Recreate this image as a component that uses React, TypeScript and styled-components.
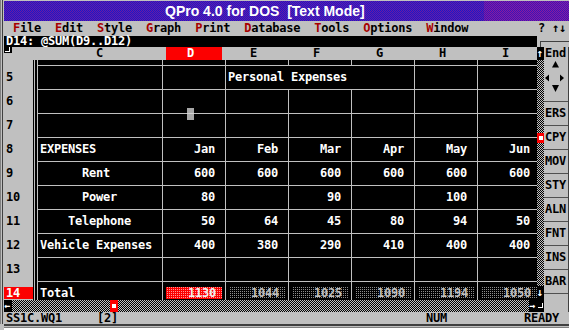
import styled, { createGlobalStyle, css } from 'styled-components';

const GRAY = '#c0c0c0';
const RED = '#fc0000';
const MENU_RED = '#a80000';
const LINE = '#c0c0c0';

const GlobalStyle = createGlobalStyle`
  html, body {
    margin: 0;
    padding: 0;
    background: #ffffff;
  }
  body {
    width: 569px;
    height: 330px;
    overflow: hidden;
  }
`;

// the DOS text mode font: bold, 7px pitch
const dosText = css`
  font-family: 'DejaVu Sans Mono', 'Liberation Mono', monospace;
  font-weight: bold;
  font-size: 12px;
  letter-spacing: -0.2246px;
  white-space: pre;
`;

const checker = (a: string, b: string) => css`
  background: repeating-conic-gradient(${a} 0 25%, ${b} 0 50%) 0 0 / 2px 2px;
`;

const COL_TEMPLATE = '29px 5px 124px repeat(6, 63px)';
const COLS = ['C', 'D', 'E', 'F', 'G', 'H', 'I'];
const ACTIVE_COL = 'D';
const ACTIVE_ROW = 14;

type CellData = { text?: string; align?: 'left' | 'right'; span?: number; total?: boolean };

const blank = (): CellData => ({});
const nums = (values: string[]): CellData[] => values.map(text => ({ text, align: 'right' }));

const ROWS: { n: number; cells: CellData[] }[] = [
  {
    n: 5,
    cells: [blank(), blank(), { text: 'Personal Expenses', align: 'left', span: 2 }, blank(), blank(), blank()]
  },
  { n: 6, cells: COLS.map(blank) },
  { n: 7, cells: COLS.map(blank) },
  {
    n: 8,
    cells: [{ text: 'EXPENSES', align: 'left' }, ...nums(['Jan', 'Feb', 'Mar', 'Apr', 'May', 'Jun'])]
  },
  {
    n: 9,
    cells: [{ text: '      Rent', align: 'left' }, ...nums(['600', '600', '600', '600', '600', '600'])]
  },
  {
    n: 10,
    cells: [{ text: '      Power', align: 'left' }, ...nums(['80', '', '90', '', '100', ''])]
  },
  {
    n: 11,
    cells: [{ text: '    Telephone', align: 'left' }, ...nums(['50', '64', '45', '80', '94', '50'])]
  },
  {
    n: 12,
    cells: [{ text: 'Vehicle Expenses', align: 'left' }, ...nums(['400', '380', '290', '410', '400', '400'])]
  },
  { n: 13, cells: COLS.map(blank) },
  {
    n: 14,
    cells: [
      { text: 'Total', align: 'left' },
      ...['1130', '1044', '1025', '1090', '1194', '1050'].map(text => ({ text, align: 'right' as const, total: true }))
    ]
  }
];

const MENU = ['File', 'Edit', 'Style', 'Graph', 'Print', 'Database', 'Tools', 'Options', 'Window'];
const BUTTONS = ['ERS', 'CPY', 'MOV', 'STY', 'ALN', 'FNT', 'INS', 'BAR'];
const STATUS = 'SS1C.WQ1'.padEnd(13) + '[2]'.padEnd(47) + 'NUM'.padEnd(14) + 'READY';

export default function App() {
  return (
    <>
      <GlobalStyle />
      <Window>
        <TitleBar>
          <TitleMain>QPro 4.0 for DOS  [Text Mode]</TitleMain>
          <TitleTail />
        </TitleBar>

        <MenuBar>
          {MENU.map(item => (
            <MenuItem key={item}>
              <Hot>{item[0]}</Hot>
              {item.slice(1)}
            </MenuItem>
          ))}
          <MenuRight>? ↑↓</MenuRight>
        </MenuBar>

        <Body>
          <Formula>D14: @SUM(D9..D12)</Formula>
          <Cap>
            <CapBox />
          </Cap>

          <ColHead>
            <CornerCell>
              <CornerBox>
                <CornerMark />
              </CornerBox>
            </CornerCell>
            <div />
            {COLS.map((c, i) => (
              <HeaderCell key={c}>
                <HeaderTag $active={c === ACTIVE_COL} $first={i === 0}>
                  {c}
                </HeaderTag>
              </HeaderCell>
            ))}
          </ColHead>
          <UpBox>↑</UpBox>
          <EndLabel>End</EndLabel>

          <Sheet>
            <SheetRow $height={5}>
              <RowHead />
              <Sep />
              {COLS.map((c, i) => (
                <Cell key={c} $left={i > 0} />
              ))}
            </SheetRow>
            {ROWS.map(row => (
              <SheetRow key={row.n} $height={24}>
                <RowHead>
                  <RowNum $active={row.n === ACTIVE_ROW}>{row.n}</RowNum>
                </RowHead>
                <Sep />
                {row.cells.map((cell, i) => (
                  <Cell
                    key={i}
                    $top
                    $left={i > 0 && !(row.n === 5 && i === 3)}
                    $align={cell.align}
                    $span={cell.span}
                  >
                    {cell.total ? (
                      <TotalBox $active={COLS[i] === ACTIVE_COL}>{cell.text}</TotalBox>
                    ) : (
                      cell.text
                    )}
                  </Cell>
                ))}
              </SheetRow>
            ))}
            <MouseCursor />
          </Sheet>

          <VScroll>
            <ThumbV>
              <ThumbDot />
            </ThumbV>
            <DownBox>↓</DownBox>
          </VScroll>

          <Panel>
            <ArrowPad>
              <svg width="25" height="41" viewBox="0 0 25 41">
                <polygon points="8,7.5 11.5,1 15,7.5" fill="#000" />
                <polygon points="1,18 5,14.5 5,21.5" fill="#000" />
                <polygon points="20,18 16,14.5 16,21.5" fill="#000" />
                <polygon points="8,25 15,25 11.5,32" fill="#000" />
              </svg>
            </ArrowPad>
            {BUTTONS.map(b => (
              <PanelButton key={b}>{b}</PanelButton>
            ))}
            <PanelFill />
          </Panel>

          <HScroll>
            <ArrowBox>←</ArrowBox>
            <HTrack>
              <ThumbH>
                <ThumbDot />
              </ThumbH>
            </HTrack>
            <ArrowBox>→</ArrowBox>
          </HScroll>
          <Corner>
            <CornerMark />
          </Corner>

          <Status>{STATUS}</Status>
        </Body>
        <BottomEdge />
      </Window>
    </>
  );
}

const Window = styled.div`
  width: 569px;
  height: 330px;
  box-sizing: border-box;
  padding: 1px 0 0 4px;
  display: flex;
  flex-direction: column;
  background:
    linear-gradient(to right, #808080 0 1px, ${GRAY} 1px 2px, #404040 2px 3px, ${GRAY} 3px 4px) no-repeat 0 0 / 4px
      324px,
    ${GRAY};
`;

const TitleBar = styled.div`
  height: 20px;
  display: flex;
`;

const TitleMain = styled.div`
  flex: 1;
  ${checker('#1a18c8', '#6a1aa4')};
  padding-left: 161px;
  color: #ffffff;
  font: bold 14px/20px 'Liberation Sans', Arial, sans-serif;
  white-space: pre;
`;

const TitleTail = styled.div`
  width: 85px;
  ${checker('#3a14b8', '#8a1aa0')};
`;

const MenuBar = styled.div`
  height: 15px;
  display: flex;
  padding-left: 9px;
  background: ${GRAY};
  color: #000000;
  ${dosText};
  line-height: 15px;
`;

const MenuItem = styled.span`
  margin-right: 14px;
`;

const Hot = styled.span`
  color: ${MENU_RED};
`;

const MenuRight = styled.span`
  margin-left: auto;
  margin-right: 3px;
`;

const Body = styled.div`
  display: grid;
  grid-template-columns: 533px 7px 25px;
  grid-template-rows: 11px 13px 240px 12px 12px;
  grid-template-areas:
    'formula cap cap'
    'colhead up end'
    'sheet vscroll panel'
    'hscroll corner panel'
    'status status status';
`;

const Formula = styled.div`
  grid-area: formula;
  background: #000000;
  color: #ffffff;
  padding-left: 2px;
  ${dosText};
  line-height: 11px;
`;

const Cap = styled.div`
  grid-area: cap;
  background: ${GRAY};
  padding: 5px 0 0 3px;
`;

const CapBox = styled.div`
  height: 100%;
  box-sizing: border-box;
  border-top: 1px solid #404040;
  border-left: 1px solid #404040;
`;

const ColHead = styled.div`
  grid-area: colhead;
  display: grid;
  grid-template-columns: ${COL_TEMPLATE};
  overflow: hidden;
  background: ${GRAY};
  ${dosText};
  color: #000000;
`;

const CornerCell = styled.div`
  display: flex;
  align-items: flex-start;
`;

const CornerBox = styled.div`
  width: 8px;
  height: 6px;
  background: #000000;
`;

const CornerMark = styled.div`
  width: 4px;
  height: 4px;
  margin-left: 1px;
  border-right: 1px solid #ffffff;
  border-bottom: 1px solid #ffffff;
`;

const HeaderCell = styled.div`
  display: flex;
`;

const HeaderTag = styled.div<{ $active?: boolean; $first?: boolean }>`
  flex: 1;
  margin: 0 3px 0 4px;
  padding: 0 ${p => (p.$first ? 2 : 7)}px 0 0;
  text-align: center;
  line-height: 13px;
  background: ${p => (p.$active ? RED : 'transparent')};
  color: ${p => (p.$active ? '#ffffff' : '#000000')};
`;

const UpBox = styled.div`
  grid-area: up;
  background: #000000;
  color: #ffffff;
  ${dosText};
  font-size: 11px;
  letter-spacing: 0;
  line-height: 13px;
  text-indent: -0.5px;
`;

const EndLabel = styled.div`
  grid-area: end;
  background: ${GRAY};
  padding-left: 1px;
  ${dosText};
  line-height: 13px;
  color: #000000;
  border-right: 1px solid #404040;
`;

const Sheet = styled.div`
  grid-area: sheet;
  position: relative;
  overflow: hidden;
  background: #000000;
  display: flex;
  flex-direction: column;
`;

const SheetRow = styled.div<{ $height: number }>`
  flex-shrink: 0;
  height: ${p => p.$height}px;
  display: grid;
  grid-template-columns: ${COL_TEMPLATE};
`;

const RowHead = styled.div`
  background: ${GRAY};
  display: flex;
  align-items: center;
`;

const RowNum = styled.div<{ $active?: boolean }>`
  flex: 1;
  height: 12px;
  padding-left: 2px;
  ${dosText};
  line-height: 12px;
  background: ${p => (p.$active ? RED : 'transparent')};
  color: ${p => (p.$active ? '#ffffff' : '#000000')};
`;

const Sep = styled.div`
  background: linear-gradient(to right, #000 0 1px, ${LINE} 1px 2px, #000 2px 4px, ${LINE} 4px 5px);
`;

const Cell = styled.div<{ $top?: boolean; $left?: boolean; $align?: 'left' | 'right'; $span?: number }>`
  grid-column: span ${p => p.$span ?? 1};
  box-sizing: border-box;
  display: flex;
  align-items: center;
  justify-content: ${p => (p.$align === 'right' ? 'flex-end' : 'flex-start')};
  padding: 0 ${p => (p.$align === 'right' ? 10 : 0)}px 1px ${p => (p.$align === 'left' ? 2 : 0)}px;
  border-top: ${p => (p.$top ? `1px solid ${LINE}` : 'none')};
  border-left: ${p => (p.$left ? `1px solid ${LINE}` : 'none')};
  background: #000000;
  color: #ffffff;
  ${dosText};
  line-height: 12px;
  overflow: hidden;
`;

const TotalBox = styled.div<{ $active?: boolean }>`
  flex: 1;
  height: 12px;
  margin: 0 -7px 0 3px;
  padding-right: 6px;
  text-align: right;
  line-height: 12px;
  color: ${p => (p.$active ? '#f0f0f0' : '#c0c0c0')};
  background: ${p =>
    p.$active
      ? `conic-gradient(#ff9a9a 0 25%, ${RED} 0) 0 0 / 2px 2px`
      : 'conic-gradient(#8c8c8c 0 25%, #000 0) 0 0 / 2px 2px'};
`;

const MouseCursor = styled.div`
  position: absolute;
  left: 183px;
  top: 48px;
  width: 7px;
  height: 12px;
  background: linear-gradient(to bottom, #a8a8a8 0 5px, #d4d4d4 5px 6px, #a8a8a8 6px);
`;

const VScroll = styled.div`
  grid-area: vscroll;
  display: flex;
  flex-direction: column;
  ${checker('#000000', GRAY)};
`;

const ThumbV = styled.div`
  margin-top: 73px;
  height: 10px;
  background: ${RED};
  display: flex;
  align-items: center;
  justify-content: center;
`;

const ThumbDot = styled.div`
  width: 4px;
  height: 4px;
  background: #ffffff;
`;

const DownBox = styled.div`
  margin-top: auto;
  height: 14px;
  background: #000000;
  color: #ffffff;
  ${dosText};
  font-size: 11px;
  letter-spacing: 0;
  line-height: 13px;
  text-indent: -0.5px;
`;

const Panel = styled.div`
  grid-area: panel;
  display: flex;
  flex-direction: column;
  background: ${GRAY};
  border-right: 1px solid #404040;
`;

const ArrowPad = styled.div`
  height: 41px;
  flex-shrink: 0;

  svg {
    display: block;
  }
`;

const PanelButton = styled.div`
  height: 24px;
  flex-shrink: 0;
  box-sizing: border-box;
  border-top: 1px solid #505050;
  padding-left: 1px;
  ${dosText};
  line-height: 23px;
  color: #000000;
  overflow: hidden;
`;

const PanelFill = styled.div`
  flex: 1;
  border-top: 1px solid #505050;
`;

const HScroll = styled.div`
  grid-area: hscroll;
  display: flex;
`;

const ArrowBox = styled.div`
  width: 8px;
  background: #000000;
  color: #ffffff;
  ${dosText};
  font-size: 10px;
  letter-spacing: 0;
  line-height: 11px;
`;

const HTrack = styled.div`
  flex: 1;
  display: flex;
  ${checker('#000000', GRAY)};
`;

const ThumbH = styled.div`
  margin-left: 98px;
  width: 8px;
  background: ${RED};
  display: flex;
  align-items: center;
  justify-content: center;
`;

const Corner = styled.div`
  grid-area: corner;
  background: #000000;
  padding-top: 3px;
`;

const Status = styled.div`
  grid-area: status;
  background: ${GRAY};
  padding-left: 2px;
  color: #000000;
  ${dosText};
  line-height: 12px;
`;

const BottomEdge = styled.div`
  height: 6px;
  background: linear-gradient(to bottom, #404040 0 2px, ${GRAY} 2px 3px, #808080 3px 4px, #ffffff 4px);
`;
